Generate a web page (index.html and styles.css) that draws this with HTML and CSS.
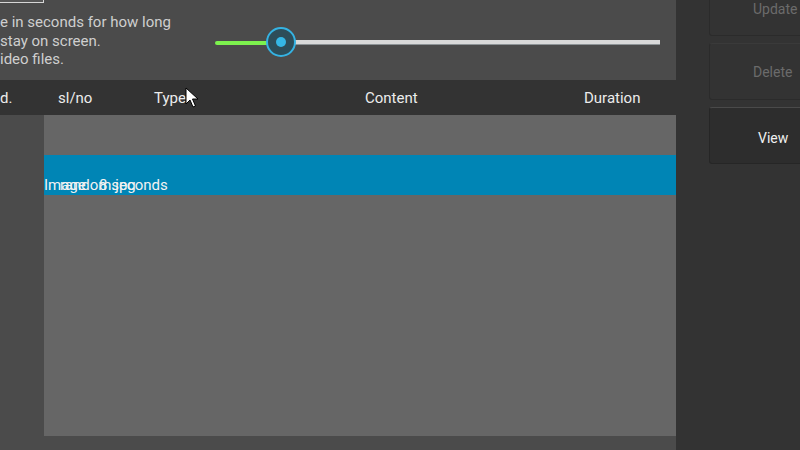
FILE: index.html
```html
<!DOCTYPE html>
<html>
<head>
<meta charset="utf-8">
<link rel="stylesheet" href="styles.css">
</head>
<body>
<div class="screen">
  <div class="main">
    <div class="settings">
      <div class="desc">
        <div class="stub"></div>
        <p class="line">e in seconds for how long</p>
        <p class="line">stay on screen.</p>
        <p class="line">ideo files.</p>
      </div>
      <div class="slider">
        <div class="track">
          <div class="fill"></div>
          <div class="rest"></div>
          <div class="thumb"><div class="dot"></div></div>
        </div>
      </div>
    </div>
    <div class="header">
      <span class="h-id">d.</span>
      <span class="h-sl">sl/no</span>
      <span class="h-type">Type</span>
      <span class="h-content">Content</span>
      <span class="h-dur">Duration</span>
    </div>
    <div class="body">
      <div class="gutter"></div>
      <div class="table">
        <div class="row-empty"></div>
        <div class="row selected">
          <span class="cell c1">Image</span>
          <span class="cell c2">random.jpg</span>
          <span class="cell c3">8 seconds</span>
        </div>
      </div>
    </div>
    <div class="footer"></div>
  </div>
  <div class="side">
    <button class="btn disabled first">Update</button>
    <button class="btn disabled">Delete</button>
    <button class="btn active">View</button>
  </div>
  <svg class="cursor" width="14" height="22" viewBox="0 0 14 22">
    <path d="M1 1 L1 17 L5 13 L8 20 L10.5 19 L7.5 12 L13 12 Z" fill="#fff" stroke="#000" stroke-width="1" stroke-linejoin="miter"/>
  </svg>
</div>
</body>
</html>
```

FILE: styles.css
```css
html, body {
  margin: 0;
  padding: 0;
  width: 800px;
  height: 450px;
  overflow: hidden;
  background: #4b4b4b;
  font-family: Roboto, "Noto Sans", sans-serif;
}

.screen {
  position: relative;
  display: flex;
  width: 800px;
  height: 450px;
  overflow: hidden;
}

.main {
  width: 676px;
  flex: none;
  display: flex;
  flex-direction: column;
  background: #4b4b4b;
}

.settings {
  height: 80px;
  display: flex;
}

.desc {
  width: 215px;
  flex: none;
}

.stub {
  width: 43px;
  height: 2px;
  border-right: 1px solid #d6d6d6;
  border-bottom: 1px solid #d6d6d6;
  background: #555;
  margin-bottom: 10px;
}

.line {
  margin: 0;
  font-size: 15px;
  line-height: 18.5px;
  color: #cfcfcf;
  white-space: nowrap;
}

.slider {
  flex: 1;
  padding-top: 40px;
  padding-right: 16px;
}

.track {
  position: relative;
  display: flex;
  height: 5px;
}

.fill {
  width: 60px;
  height: 4px;
  margin-top: 1px;
  background: #7df24e;
  border-radius: 2px 0 0 2px;
}

.rest {
  flex: 1;
  height: 4px;
  background: #d9d9d9;
  border-bottom: 1px solid #8d9396;
}

.thumb {
  position: absolute;
  left: 51px;
  top: -13px;
  width: 26px;
  height: 26px;
  border: 2px solid #35b3e3;
  border-radius: 50%;
  background: #2d4d59;
  display: flex;
  align-items: center;
  justify-content: center;
}

.dot {
  width: 10px;
  height: 10px;
  border-radius: 50%;
  background: #35b7e6;
}

.header {
  height: 35px;
  background: #333333;
  position: relative;
  font-size: 15px;
  color: #ececec;
}

.header span {
  position: absolute;
  top: 9px;
  white-space: nowrap;
}

.h-id { left: 0; }
.h-sl { left: 58px; }
.h-type { left: 154px; }
.h-content { left: 365px; }
.h-dur { left: 584px; }

.body {
  height: 321px;
  display: flex;
}

.gutter {
  width: 44px;
  flex: none;
}

.table {
  flex: 1;
  background: #666666;
  display: flex;
  flex-direction: column;
}

.row-empty {
  height: 40px;
}

.row {
  height: 40px;
  display: grid;
  grid-template-columns: 1fr;
  align-items: end;
  padding-bottom: 1px;
  box-sizing: border-box;
}

.selected {
  background: #0085b5;
}

.cell {
  grid-row: 1;
  grid-column: 1;
  font-size: 15px;
  color: #f2f2f2;
  white-space: nowrap;
}

.c2 { margin-left: 16px; }
.c3 { margin-left: 55px; }

.footer {
  flex: 1;
}

.side {
  width: 124px;
  flex: none;
  background: #333333;
  padding-left: 33px;
  display: flex;
  flex-direction: column;
  gap: 7px;
}

.btn {
  width: 131px;
  height: 57px;
  flex: none;
  font-family: Roboto, "Noto Sans", sans-serif;
  font-size: 14px;
  border-radius: 3px;
  padding: 0 0 0 43px;
  text-align: left;
}

.btn.first {
  margin-top: -21px;
  padding-top: 3px;
}

.disabled {
  background: #333333;
  color: #6b6b6b;
  border: 1px solid #2b2b2b;
  border-top-color: #3a3a3a;
}

.active {
  background: #2d2d2d;
  color: #f0f0f0;
  border: 1px solid #262626;
  border-top-color: #4a4a4a;
  padding-left: 48px;
  padding-top: 4px;
}

.cursor {
  position: absolute;
  left: 185px;
  top: 87px;
}
```
